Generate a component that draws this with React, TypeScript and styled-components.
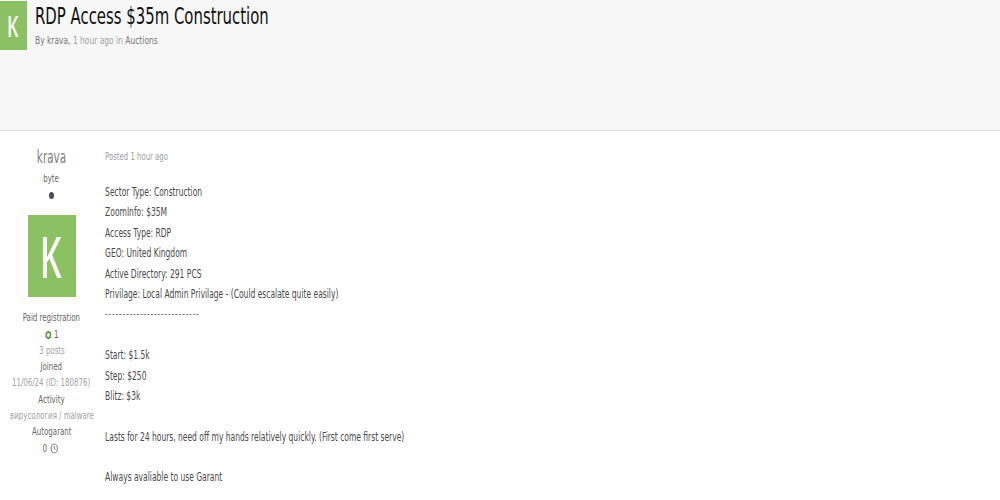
import React from 'react';
import styled, { createGlobalStyle } from 'styled-components';

const GlobalStyle = createGlobalStyle`
  html, body {
    margin: 0;
    padding: 0;
    background: #fff;
  }
  body {
    font-family: "DejaVu Sans", Verdana, sans-serif;
    font-stretch: condensed;
    width: 1000px;
    height: 500px;
    overflow: hidden;
  }
`;

const TopicHeader = styled.header`
  display: flex;
  align-items: flex-start;
  gap: 8px;
  height: 131px;
  box-sizing: border-box;
  padding-top: 1px;
  background: #f7f7f8;
  border-bottom: 1px solid #e0e0e0;
`;

const Avatar = styled.div<{ $size: 'small' | 'large' }>`
  display: flex;
  align-items: center;
  justify-content: center;
  flex: none;
  box-sizing: border-box;
  padding-right: 2px;
  background: #8cc163;
  color: #fff;
  width: ${(p) => (p.$size === 'large' ? '48px' : '27px')};
  height: ${(p) => (p.$size === 'large' ? '82px' : '49px')};
  font-family: "Open Sans", sans-serif;
  font-size: ${(p) => (p.$size === 'large' ? '56px' : '29px')};
  span {
    display: block;
    transform: scaleX(0.9);
  }
`;

const TitleBlock = styled.div`
  display: flex;
  flex-direction: column;
`;

const Title = styled.h1`
  margin: 0;
  font-weight: 400;
  font-size: 23px;
  line-height: 30px;
  color: #111;
  white-space: nowrap;
  transform: scaleX(0.72);
  transform-origin: left;
`;

const Byline = styled.div`
  font-size: 11px;
  line-height: 16px;
  color: #777;
  margin-top: 2px;
  white-space: nowrap;
  transform: scaleX(0.76);
  transform-origin: left;
  span {
    color: #a0a0a0;
  }
`;

const Post = styled.main`
  display: flex;
  padding-top: 17px;
`;

const AuthorColumn = styled.aside`
  display: flex;
  flex-direction: column;
  align-items: center;
  width: 103px;
  flex: none;
  font-size: 11px;
  color: #666;
`;

const AuthorName = styled.div`
  font-size: 17px;
  line-height: 18px;
  color: #808080;
  margin-bottom: 5px;
  transform: scaleX(0.68);
`;

const Meta = styled.div<{ $muted?: boolean }>`
  display: flex;
  align-items: center;
  gap: 3px;
  line-height: 16.3px;
  color: ${(p) => (p.$muted ? '#a3a3a3' : '#666')};
  white-space: nowrap;
  transform: scaleX(0.71);
`;

const Pip = styled.div`
  width: 5px;
  height: 7px;
  border-radius: 50%;
  background: #4a4f57;
  margin: 5px 0 16px;
`;

const RankAvatar = styled.div`
  margin: 0 0 13px;
`;

const Body = styled.article`
  font-size: 12px;
  color: #4a4a4a;
  padding-left: 3px;
  margin-top: 1px;
  transform: scaleX(0.7);
  transform-origin: left;
`;

const PostedAt = styled.div`
  color: #a0a0a0;
  font-size: 11px;
  line-height: 16px;
  margin-bottom: 17px;
`;

const Line = styled.div<{ $rule?: boolean }>`
  height: 20.4px;
  line-height: 20.4px;
  white-space: pre;
  letter-spacing: ${(p) => (p.$rule ? '1.1px' : 'normal')};
  color: ${(p) => (p.$rule ? '#777' : 'inherit')};
`;

const RULE = '---------------------------';

const lines = [
  'Sector Type: Construction',
  'ZoomInfo: $35M',
  'Access Type: RDP',
  'GEO: United Kingdom',
  'Active Directory: 291 PCS',
  'Privilage: Local Admin Privilage - (Could escalate quite easily)',
  RULE,
  '',
  'Start: $1.5k',
  'Step: $250',
  'Blitz: $3k',
  '',
  'Lasts for 24 hours, need off my hands relatively quickly. (First come first serve)',
  '',
  'Always avaliable to use Garant',
];

const ReputationIcon = () => (
  <svg width="10" height="10" viewBox="0 0 10 10">
    <path d="M5 .5 9 2.7v4.6L5 9.5 1 7.3V2.7z" fill="#5a9a45" />
    <circle cx="5" cy="5" r="1.9" fill="#fff" />
  </svg>
);

const GarantIcon = () => (
  <svg width="15" height="11" viewBox="0 0 15 11" fill="none" stroke="#666" strokeWidth="1">
    <circle cx="7.5" cy="5.5" r="4.4" />
    <path d="M7.5 3v2.5l2 1" />
  </svg>
);

const App: React.FC = () => (
  <>
    <GlobalStyle />
    <TopicHeader>
      <Avatar $size="small"><span>K</span></Avatar>
      <TitleBlock>
        <Title>RDP Access $35m Construction</Title>
        <Byline>
          By krava, <span>1 hour ago in</span> Auctions
        </Byline>
      </TitleBlock>
    </TopicHeader>
    <Post>
      <AuthorColumn>
        <AuthorName>krava</AuthorName>
        <Meta>byte</Meta>
        <Pip />
        <RankAvatar>
          <Avatar $size="large"><span>K</span></Avatar>
        </RankAvatar>
        <Meta>Paid registration</Meta>
        <Meta>
          <ReputationIcon /> 1
        </Meta>
        <Meta $muted>3 posts</Meta>
        <Meta>Joined</Meta>
        <Meta $muted>11/06/24 (ID: 180876)</Meta>
        <Meta>Activity</Meta>
        <Meta $muted>вирусология / malware</Meta>
        <Meta>Autogarant</Meta>
        <Meta>
          0 <GarantIcon />
        </Meta>
      </AuthorColumn>
      <Body>
        <PostedAt>Posted 1 hour ago</PostedAt>
        {lines.map((line, i) => (
          <Line key={i} $rule={line === RULE}>{line}</Line>
        ))}
      </Body>
    </Post>
  </>
);

export default App;
